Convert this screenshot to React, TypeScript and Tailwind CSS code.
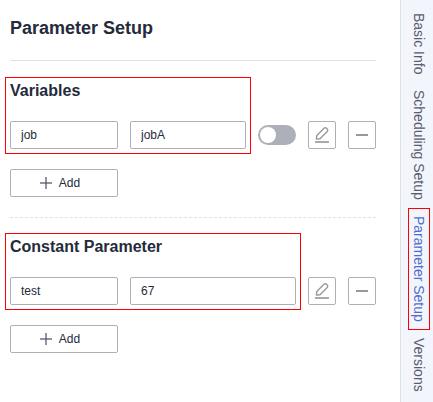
import type { ReactNode } from "react";

function PencilIcon() {
  return (
    <svg width="16" height="18" viewBox="0 0 16 18" fill="none" stroke="#999999" aria-hidden="true">
      <path d="M2.4 13 L2.8 9.6 L10 2.3 Q11.3 1.1 12.6 2.3 L13.2 2.9 Q14.4 4.2 13.2 5.5 L6 12.7 Z" strokeWidth="1.4" strokeLinejoin="round" />
      <path d="M1 16H15" stroke="#aaaaaa" strokeWidth="2" />
    </svg>
  );
}

function MinusIcon() {
  return (
    <svg width="12" height="2" viewBox="0 0 12 2" aria-hidden="true">
      <path d="M0 1H12" stroke="#999999" strokeWidth="2" />
    </svg>
  );
}

function PlusIcon() {
  return (
    <svg width="12" height="12" viewBox="0 0 12 12" aria-hidden="true">
      <path d="M0 6H12M6 0V12" stroke="#9295a1" strokeWidth="2" />
      <path d="M5 5H7V7H5Z" fill="#6b6f7d" />
    </svg>
  );
}

function Field({ label, value, className }: { label: string; value: string; className: string }) {
  return (
    <input
      aria-label={label}
      defaultValue={value}
      className={`h-7 min-w-0 rounded-xs border border-[#adb0b8] bg-white px-2.5 text-xs text-[#252b3a] outline-none ${className}`}
    />
  );
}

function IconButton({ label, children }: { label: string; children: ReactNode }) {
  return (
    <button
      type="button"
      aria-label={label}
      className="flex size-7 shrink-0 items-center justify-center rounded-xs border border-[#adb0b8] bg-white"
    >
      {children}
    </button>
  );
}

function Toggle({ label }: { label: string }) {
  return (
    <label className="flex h-7 shrink-0 items-center">
      <input
        type="checkbox"
        aria-label={label}
        className="h-5 w-[38px] appearance-none rounded-full bg-[#adb0b8] p-px before:ml-px before:mt-px before:block before:size-4 before:rounded-full before:bg-white checked:bg-[#526ecc] checked:before:ml-[19px]"
      />
    </label>
  );
}

function ParameterSection({
  title,
  name,
  value,
  toggle,
}: {
  title: string;
  name: string;
  value: string;
  toggle?: boolean;
}) {
  return (
    <section>
      <div className="flex items-end gap-3">
        <div className="relative min-w-0 flex-1">
          <h2 className="text-base leading-5 font-bold">{title}</h2>
          <div className="mt-5 flex gap-3">
            <Field label={`${title} name`} value={name} className="w-27 shrink-0" />
            <Field label={`${title} value`} value={value} className="flex-1" />
          </div>
          <div className="pointer-events-none absolute -inset-x-[5px] -top-1 -bottom-[5px] border border-[#ff0000]" />
        </div>
        {toggle && <Toggle label="Enable variable" />}
        <IconButton label="Edit">
          <PencilIcon />
        </IconButton>
        <IconButton label="Remove">
          <MinusIcon />
        </IconButton>
      </div>
      <button
        type="button"
        className="mt-5 flex h-7 w-27 items-center justify-center gap-[7px] rounded-xs border border-[#adb0b8] bg-white pr-2 text-xs"
      >
        <PlusIcon />
        Add
      </button>
    </section>
  );
}

const tabs = ["Basic Info", "Scheduling Setup", "Parameter Setup", "Versions"];

export default function App() {
  return (
    <div className="flex min-h-screen bg-white font-['Liberation_Sans',Arial,sans-serif] text-[#252b3a]">
      <main className="min-w-0 flex-1 pr-6 pl-2.5">
        <h1 className="pt-4 pb-5 text-lg leading-6 font-bold">Parameter Setup</h1>
        <hr className="mb-5 border-[#dfe1e6]" />
        <ParameterSection title="Variables" name="job" value="jobA" toggle />
        <hr className="mt-5 mb-[19px] border-dashed border-[#dfe1e6]" />
        <ParameterSection title="Constant Parameter" name="test" value="67" />
      </main>
      <nav aria-label="Panels" className="w-[33px] shrink-0 border-l border-[#dfe1e6] bg-[#f2f5fc] pt-[13px] pl-2">
        <ul className="flex flex-col gap-4">
          {tabs.map((tab) => {
            const active = tab === "Parameter Setup";
            return (
              <li key={tab} className="relative flex">
                <button
                  type="button"
                  aria-current={active}
                  className={`text-sm leading-5 whitespace-nowrap [writing-mode:vertical-rl] ${active ? "text-[#526ecc]" : "text-[#575d6c]"}`}
                >
                  {tab}
                </button>
                {active && (
                  <div className="pointer-events-none absolute -inset-y-2 -left-px w-[22px] border border-[#ff0000]" />
                )}
              </li>
            );
          })}
        </ul>
      </nav>
    </div>
  );
}
